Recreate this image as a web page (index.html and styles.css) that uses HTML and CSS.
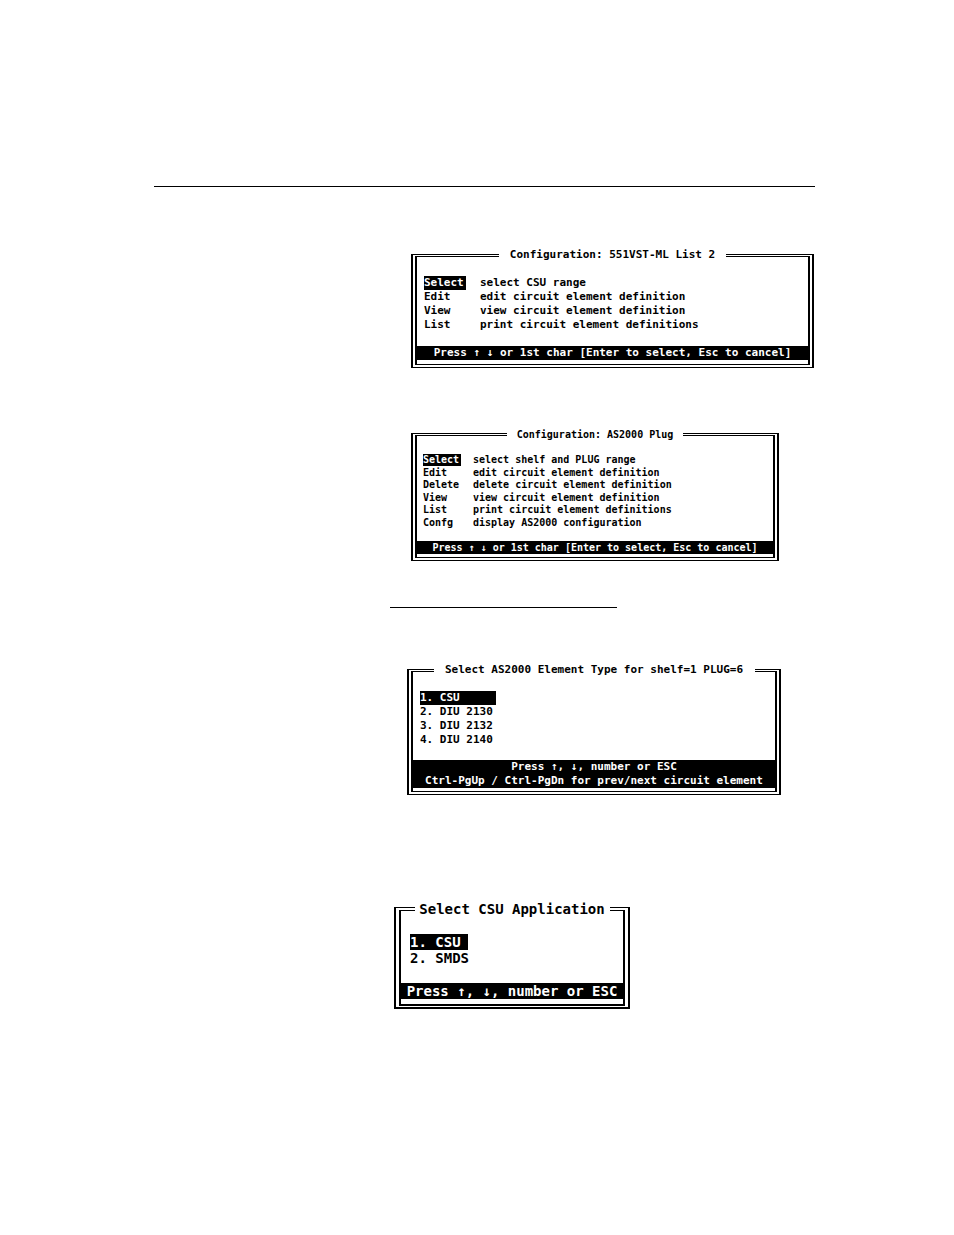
FILE: index.html
```html
<!DOCTYPE html>
<html lang="en">
<head>
<meta charset="utf-8">
<title>Configuration menus</title>
<link rel="stylesheet" href="styles.css">
</head>
<body>
<main class="page">
  <hr class="rule">

  <fieldset class="panel panel-list2">
    <legend class="title">Configuration: 551VST-ML List 2</legend>
    <div class="menu">
      <button class="item selected"><span class="key">Select</span><span>select CSU range</span></button>
      <button class="item"><span class="key">Edit</span><span>edit circuit element definition</span></button>
      <button class="item"><span class="key">View</span><span>view circuit element definition</span></button>
      <button class="item"><span class="key">List</span><span>print circuit element definitions</span></button>
    </div>
    <p class="help">Press ↑ ↓ or 1st char [Enter to select, Esc to cancel]</p>
  </fieldset>

  <fieldset class="panel panel-plug">
    <legend class="title">Configuration: AS2000 Plug</legend>
    <div class="menu">
      <button class="item selected"><span class="key">Select</span><span>select shelf and PLUG range</span></button>
      <button class="item"><span class="key">Edit</span><span>edit circuit element definition</span></button>
      <button class="item"><span class="key">Delete</span><span>delete circuit element definition</span></button>
      <button class="item"><span class="key">View</span><span>view circuit element definition</span></button>
      <button class="item"><span class="key">List</span><span>print circuit element definitions</span></button>
      <button class="item"><span class="key">Confg</span><span>display AS2000 configuration</span></button>
    </div>
    <p class="help">Press ↑ ↓ or 1st char [Enter to select, Esc to cancel]</p>
  </fieldset>

  <hr class="rule rule-section">

  <fieldset class="panel panel-element">
    <legend class="title">Select AS2000 Element Type for shelf=1 PLUG=6</legend>
    <div class="menu">
      <button class="item selected"><span class="key">1. CSU</span></button>
      <button class="item"><span class="key">2. DIU 2130</span></button>
      <button class="item"><span class="key">3. DIU 2132</span></button>
      <button class="item"><span class="key">4. DIU 2140</span></button>
    </div>
    <p class="help">Press ↑, ↓, number or ESC<br>Ctrl-PgUp / Ctrl-PgDn for prev/next circuit element</p>
  </fieldset>

  <fieldset class="panel panel-application">
    <legend class="title">Select CSU Application</legend>
    <div class="menu">
      <button class="item selected"><span class="key">1. CSU</span></button>
      <button class="item"><span class="key">2. SMDS</span></button>
    </div>
    <p class="help">Press ↑, ↓, number or ESC</p>
  </fieldset>
</main>
</body>
</html>
```

FILE: styles.css
```css
* { box-sizing: border-box; }

body {
  margin: 0;
  background: #fff;
  color: #000;
}

.page {
  padding: 186px 139px 226px 154px;
}

.rule {
  height: 1px;
  margin: 0;
  border: 0;
  background: #000;
}

.rule-section {
  max-width: 227px;
  margin: 46px 0 0 236px;
}

.panel {
  --row: 14px;
  --key: 42px;
  min-width: 0;
  margin: 0;
  padding: 0 0 4px;
  border: 6px double #000;
  border-top-width: 3px;
  border-bottom-width: 4px;
  font: bold 11px/var(--row) "DejaVu Sans Mono", "Liberation Mono", monospace;
  white-space: nowrap;
}

.title {
  margin: 0 auto;
  padding: 0;
  text-align: center;
}

.menu {
  display: grid;
  align-content: space-between;
  margin: 14px 7px;
}

.item {
  display: flex;
  gap: 14px;
  height: var(--row);
  padding: 0;
  border: 0;
  background: none;
  color: inherit;
  font: inherit;
  text-align: left;
}

.key {
  width: var(--key);
}

.selected .key {
  background: #000;
  color: #fff;
}

.help {
  margin: 0;
  background: #000;
  color: #fff;
  text-align: center;
}

.panel-list2 {
  max-width: 403px;
  margin: 61px 0 0 257px;
}

.panel-list2 .title { width: 227px; }

.panel-plug {
  --row: 13px;
  --key: 38px;
  max-width: 368px;
  margin: 60px 0 0 257px;
  padding-bottom: 3px;
  font-size: 10px;
}

.panel-plug .title { width: 176px; }

.panel-plug .menu {
  height: 75px;
  margin: 13px 6px 12px;
}

.panel-plug .item {
  gap: 12px;
  height: 12px;
  line-height: 12px;
}

.panel-element {
  --key: 76px;
  max-width: 374px;
  margin: 55px 0 0 253px;
  padding-bottom: 3px;
}

.panel-element .title { width: 321px; }

.panel-element .menu { margin-bottom: 13px; }

.panel-application {
  --row: 16px;
  --key: 58px;
  max-width: 236px;
  margin: 106px 0 0 240px;
  padding-bottom: 5px;
  border-width: 4px 7px 5px;
  font-size: 14px;
}

.panel-application .title { width: 195px; }

.panel-application .menu { margin: 17px 9px; }
```
